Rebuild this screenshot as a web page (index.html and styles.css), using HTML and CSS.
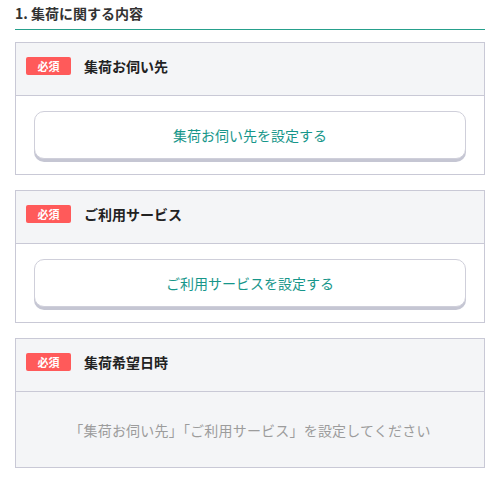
FILE: index.html
```html
<!DOCTYPE html>
<html lang="ja">
<head>
<meta charset="utf-8">
<link rel="stylesheet" href="styles.css">
</head>
<body>
<div class="page">
  <h2 class="section-title">1. 集荷に関する内容</h2>

  <div class="card">
    <div class="card-head">
      <span class="badge">必須</span>
      <span class="card-title">集荷お伺い先</span>
    </div>
    <div class="card-body">
      <button class="btn">集荷お伺い先を設定する</button>
    </div>
  </div>

  <div class="card">
    <div class="card-head">
      <span class="badge">必須</span>
      <span class="card-title">ご利用サービス</span>
    </div>
    <div class="card-body">
      <button class="btn">ご利用サービスを設定する</button>
    </div>
  </div>

  <div class="card">
    <div class="card-head">
      <span class="badge">必須</span>
      <span class="card-title">集荷希望日時</span>
    </div>
    <div class="card-body disabled">
      <p class="note">「集荷お伺い先」「ご利用サービス」を設定してください</p>
    </div>
  </div>
</div>
</body>
</html>
```

FILE: styles.css
```css
* { box-sizing: border-box; }
html, body { margin: 0; padding: 0; background: #fff; }
body {
  font-family: "Noto Sans CJK JP", "Noto Sans", sans-serif;
  color: #333;
}
.page {
  padding: 0 15px;
  display: flex;
  flex-direction: column;
  gap: 15px;
}
.section-title {
  margin: 0 0 -3px;
  padding: 3px 0 6px;
  font-size: 14px;
  font-weight: 700;
  line-height: 20px;
  color: #333;
  border-bottom: 1px solid #26a08c;
}
.card {
  border: 1px solid #c9c9d6;
  background: #fff;
}
.card-head {
  background: #f4f5f7;
  height: 53px;
  padding: 14px 10px 0;
  display: flex;
  align-items: flex-start;
  gap: 13px;
  border-bottom: 1px solid #c9c9d6;
}
.badge {
  display: inline-block;
  width: 45px;
  height: 18px;
  line-height: 18px;
  background: #ff5a5a;
  color: #fff;
  font-size: 11px;
  font-weight: 700;
  text-align: center;
  border-radius: 2px;
}
.card-title {
  font-size: 14px;
  font-weight: 700;
  line-height: 18px;
  color: #222;
}
.card-body {
  padding: 15px 18px 15px;
}
.btn {
  display: block;
  width: 100%;
  height: 48px;
  background: #fff;
  border: 1px solid #cfcfda;
  border-radius: 10px;
  box-shadow: 0 3px 0 #c5c6d3;
  font-family: inherit;
  font-size: 14px;
  color: #17968a;
  cursor: pointer;
}
.card-body.disabled {
  background: #f4f5f7;
  padding: 0;
  height: 75px;
  display: flex;
  align-items: center;
  justify-content: center;
}
.note {
  margin: 0;
  font-size: 14px;
  color: #9c9c9c;
  letter-spacing: 0.2px;
}
```
